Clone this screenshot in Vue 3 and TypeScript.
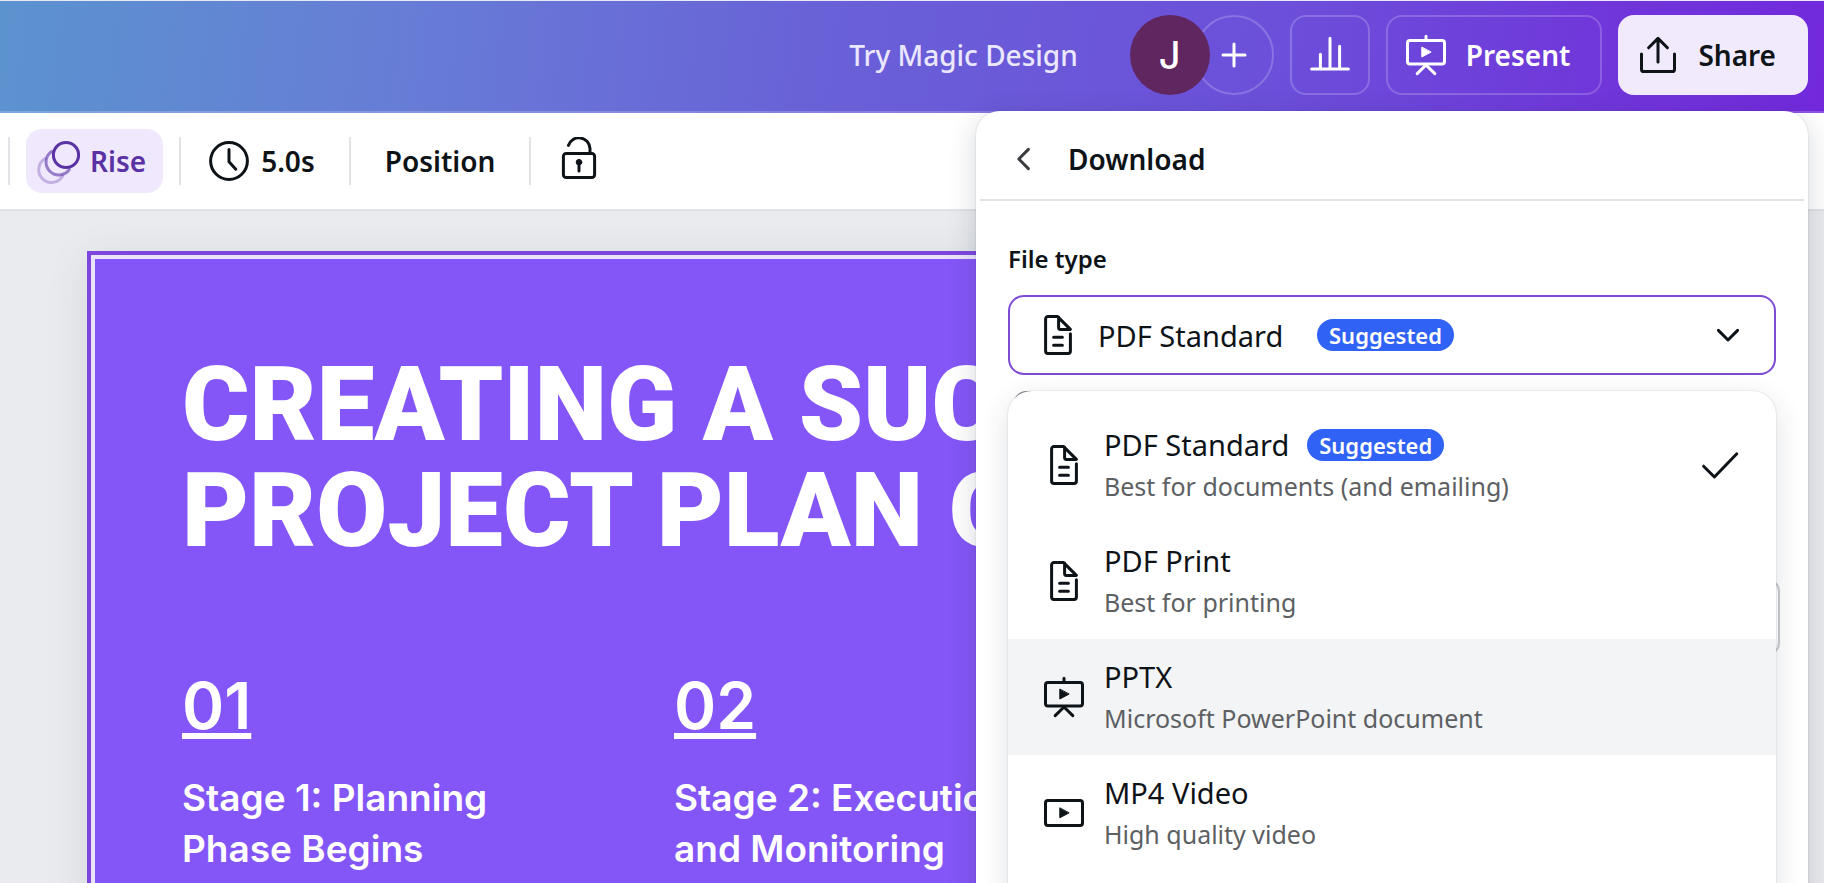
<script setup lang="ts">
import { ref } from 'vue'

type IconName = 'doc' | 'slides' | 'video'

interface FileType {
  id: string
  name: string
  hint: string
  icon: IconName
  suggested?: boolean
}

const fileTypes: FileType[] = [
  { id: 'pdf', name: 'PDF Standard', hint: 'Best for documents (and emailing)', icon: 'doc', suggested: true },
  { id: 'print', name: 'PDF Print', hint: 'Best for printing', icon: 'doc' },
  { id: 'pptx', name: 'PPTX', hint: 'Microsoft PowerPoint document', icon: 'slides' },
  { id: 'mp4', name: 'MP4 Video', hint: 'High quality video', icon: 'video' },
]

const stages = [
  { no: '01', lines: ['Stage 1: Planning', 'Phase Begins'] },
  { no: '02', lines: ['Stage 2: Execution', 'and Monitoring'] },
]

const selected = ref('pdf')
const active = ref('pptx')
</script>

<template>
  <div class="editor">
    <header class="topbar">
      <a class="magic" href="#">Try Magic Design</a>
      <div class="people">
        <button class="avatar" aria-label="Account">J</button>
        <button class="invite" aria-label="Add member">
          <svg class="icon" viewBox="0 0 24 24"><path d="M12 6.5v11M6.5 12h11" /></svg>
        </button>
      </div>
      <button class="ghost square" aria-label="Insights">
        <svg class="icon" viewBox="0 0 24 24"><path d="M2.8 19h18.4M7.2 18.5V11.6M12 18.5V3.6M16.8 18.5V7.6" /></svg>
      </button>
      <button class="ghost wide">
        <svg class="icon" viewBox="0 0 24 24">
          <rect x="2.75" y="4.75" width="18.5" height="11.7" rx="1.2" />
          <path d="M12 2.6v2M7.6 21.3l4.4-4.3 4.4 4.3" />
          <path class="solid" d="M9.9 8.2v4.8l4.5-2.4z" />
        </svg>
        <span>Present</span>
      </button>
      <button class="share">
        <svg class="icon" viewBox="0 0 24 24">
          <path d="M3.75 11.5v7.6c0 .7.5 1.2 1.2 1.2h14.1c.7 0 1.2-.5 1.2-1.2v-7.6M12 15.5V4M7.3 8.4 12 3.7l4.7 4.7" />
        </svg>
        <span>Share</span>
      </button>
    </header>

    <nav class="toolbar">
      <i class="sep"></i>
      <button class="tool rise">
        <svg class="icon" viewBox="0 0 24 24">
          <path opacity=".3" d="M4.6 10.8a6.4 6.4 0 1 0 8.8 8.6" />
          <path opacity=".6" d="M7.8 7.3a6.4 6.4 0 1 0 8.9 8.9" />
          <circle cx="15" cy="9" r="6.3" />
        </svg>
        <span>Rise</span>
      </button>
      <i class="sep"></i>
      <button class="tool timing">
        <svg class="icon" viewBox="0 0 24 24"><circle cx="12" cy="12" r="9.2" /><path d="M12 6.2v6.2l3.4 3.7" /></svg>
        <span>5.0s</span>
      </button>
      <i class="sep"></i>
      <button class="tool position">Position</button>
      <i class="sep"></i>
      <button class="tool lock" aria-label="Unlocked">
        <svg class="icon" viewBox="0 0 24 24">
          <rect x="4.2" y="8.2" width="15.6" height="12.1" rx="1.4" />
          <path d="M6.7 4.2a5.55 5.55 0 0 1 10.8 1.6v2.4M12 13v4" />
          <circle class="solid" cx="12" cy="12.6" r="1.4" />
        </svg>
      </button>
    </nav>

    <main class="workspace">
      <article class="slide">
        <h1>CREATING A SUC<br />PROJECT PLAN O</h1>
        <div class="stages">
          <section v-for="s in stages" :key="s.no">
            <p class="no">{{ s.no }}</p>
            <h2>{{ s.lines[0] }}<br />{{ s.lines[1] }}</h2>
          </section>
        </div>
      </article>
    </main>

    <aside class="panel">
      <div class="panel-head">
        <button class="back" aria-label="Back">
          <svg class="icon" viewBox="0 0 24 24"><path d="M14.2 7.2 9.4 12l4.8 4.8" /></svg>
        </button>
        <h3>Download</h3>
      </div>
      <div class="panel-body">
        <label for="file-type">File type</label>
        <div class="field">
          <select id="file-type" v-model="selected">
            <option v-for="f in fileTypes" :key="f.id" :value="f.id">{{ f.name }}</option>
          </select>
          <svg class="icon field-icon" viewBox="0 0 24 24">
            <path d="M18.2 11.4v8.6c0 .7-.5 1.2-1.2 1.2H7c-.7 0-1.2-.5-1.2-1.2V4c0-.7.5-1.2 1.2-1.2h4.8l6.4 6.4h-4.9c-.6 0-1-.4-1-1V3M9.8 13.1h4.4M9.8 17.1h4.4" />
          </svg>
          <span class="badge field-badge">Suggested</span>
          <svg class="icon field-arrow" viewBox="0 0 24 24"><path d="M7.2 9.7 12 14.5l4.8-4.8" /></svg>
        </div>
        <div class="settings">
          <input class="tick" type="checkbox" aria-label="Flatten PDF" />
          <input class="pages" type="text" aria-label="Pages" />
        </div>
        <ul class="menu" role="listbox" aria-label="File type">
          <li
            v-for="f in fileTypes"
            :key="f.id"
            role="option"
            :aria-selected="f.id === selected"
            :class="{ active: f.id === active }"
            @mouseenter="active = f.id"
            @click="selected = f.id"
          >
            <svg class="icon" viewBox="0 0 24 24">
              <path
                v-if="f.icon === 'doc'"
                d="M18.2 11.4v8.6c0 .7-.5 1.2-1.2 1.2H7c-.7 0-1.2-.5-1.2-1.2V4c0-.7.5-1.2 1.2-1.2h4.8l6.4 6.4h-4.9c-.6 0-1-.4-1-1V3M9.8 13.1h4.4M9.8 17.1h4.4"
              />
              <template v-else-if="f.icon === 'slides'">
                <rect x="2.75" y="4.75" width="18.5" height="11.7" rx="1.2" />
                <path d="M12 2.6v2M7.6 21.3l4.4-4.3 4.4 4.3" />
                <path class="solid" d="M9.9 8.2v4.8l4.5-2.4z" />
              </template>
              <template v-else>
                <rect x="2.75" y="5.75" width="18.5" height="12.5" rx="1.2" />
                <path class="solid" d="M9.9 9.6v4.8l4.5-2.4z" />
              </template>
            </svg>
            <div class="info">
              <p class="name">{{ f.name }}<span v-if="f.suggested" class="badge">Suggested</span></p>
              <p class="hint">{{ f.hint }}</p>
            </div>
            <svg v-if="f.id === selected" class="icon" viewBox="0 0 24 24"><path d="M3.8 12.6 9.2 18 20.4 6.4" /></svg>
          </li>
        </ul>
      </div>
    </aside>
  </div>
</template>

<style>
body {
  margin: 0;
}
</style>

<style scoped>
* {
  box-sizing: border-box;
}

.editor {
  position: relative;
  display: flex;
  flex-direction: column;
  height: 100vh;
  overflow: hidden;
  color: #0e1318;
  font-family: 'Noto Sans', sans-serif;
  font-size: 28px;
}

h1,
h2,
h3,
p,
ul {
  margin: 0;
  padding: 0;
}

button {
  display: flex;
  align-items: center;
  padding: 0;
  border: 0;
  background: none;
  color: inherit;
  font: inherit;
  font-weight: 600;
  cursor: pointer;
}

.icon {
  flex: none;
  width: 48px;
  height: 48px;
  fill: none;
  stroke: currentColor;
  stroke-width: 1.5;
  stroke-linecap: round;
  stroke-linejoin: round;
}

.icon .solid {
  fill: currentColor;
  stroke-width: 0.5;
}

.topbar {
  display: flex;
  flex: none;
  align-items: center;
  justify-content: flex-end;
  gap: 16px;
  height: 113px;
  padding: 0 16px 2px;
  border-top: 1px solid #e9e9f5;
  border-bottom: 2px solid rgba(255, 255, 255, 0.2);
  background: linear-gradient(97deg, #5b93cf 0%, #677cd6 23%, #6961d7 45%, #6c4fda 70%, #7036da 88%, #7229dc 100%) border-box;
  color: #fff;
}

.magic {
  margin-right: 36px;
  color: #ebe7ff;
  font-weight: 500;
  text-decoration: none;
}

.people {
  display: flex;
}

.avatar,
.invite {
  justify-content: center;
  width: 80px;
  height: 80px;
  border-radius: 50%;
}

.avatar {
  z-index: 1;
  background: #60265f;
  font-family: Inter, sans-serif;
  font-size: 38px;
  font-weight: 500;
}

.invite {
  margin-left: -16px;
  border: 2px solid rgba(255, 255, 255, 0.2);
}

.ghost {
  height: 80px;
  border: 2px solid rgba(255, 255, 255, 0.2);
  border-radius: 16px;
}

.square {
  justify-content: center;
  width: 80px;
}

.wide {
  gap: 16px;
  padding: 0 30px 0 14px;
}

.share {
  gap: 16px;
  height: 80px;
  padding: 0 32px 0 16px;
  border-radius: 16px;
  background: #f1eafd;
  color: #0e1318;
}

.toolbar {
  display: flex;
  flex: none;
  align-items: center;
  height: 98px;
  padding-left: 8px;
  border-bottom: 2px solid #e1e2e6;
  background: #fff;
}

.sep {
  width: 2px;
  height: 48px;
  background: #e1e3e6;
}

.tool {
  height: 64px;
}

.rise {
  gap: 6px;
  margin: 0 16px;
  padding: 0 17px 0 10px;
  border-radius: 16px;
  background: #f0e9fe;
  color: #5a32a3;
}

.timing {
  gap: 8px;
  padding: 0 34px 0 24px;
}

.position {
  padding: 0 34px;
}

.lock {
  padding: 0 24px;
}

.workspace {
  flex: 1;
  min-height: 0;
  padding: 40px 80px 0 87px;
  background: #e9ebee;
}

.slide {
  height: 900px;
  padding: 97px 0 0 87px;
  overflow: hidden;
  border: 4px solid #7d46dd;
  outline: 4px solid #ebe3fd;
  outline-offset: -8px;
  background: #8456f7;
  box-shadow: 0 8px 40px rgba(60, 70, 90, 0.1);
  color: #fff;
  font-family: Inter, sans-serif;
}

.slide h1 {
  margin-left: 4px;
  font-family: Roboto, sans-serif;
  font-size: 103px;
  font-weight: 900;
  line-height: 106px;
  white-space: nowrap;
}

.stages {
  display: grid;
  grid-template-columns: 492px 492px;
  margin: 102px 0 0 4px;
}

.no {
  font-size: 64px;
  font-weight: 600;
  line-height: 80px;
  text-decoration: underline;
  text-decoration-thickness: 6px;
  text-underline-offset: 4px;
  text-decoration-skip-ink: none;
}

.slide h2 {
  margin-top: 26px;
  font-size: 37px;
  font-weight: 600;
  line-height: 51px;
  white-space: nowrap;
}

.panel {
  position: absolute;
  top: 111px;
  right: 16px;
  bottom: -40px;
  width: 832px;
  border-radius: 24px;
  background: #fff;
  box-shadow: 0 0 2px rgba(40, 50, 70, 0.2), 0 8px 28px rgba(40, 50, 70, 0.2);
}

.panel-head {
  display: flex;
  align-items: center;
  gap: 20px;
  height: 90px;
  margin: 0 4px;
  padding: 8px 20px 0;
  border-bottom: 2px solid #e1e4e6;
}

.back {
  color: #3a3d40;
}

.panel-head h3 {
  font-size: 28px;
  font-weight: 600;
}

.panel-body {
  position: relative;
  padding: 40px 32px 0;
}

.panel-body label {
  display: block;
  height: 54px;
  font-size: 24px;
  font-weight: 600;
  line-height: 36px;
}

.field {
  position: relative;
}

.field select {
  display: block;
  width: 100%;
  height: 80px;
  padding: 0 88px;
  border: 2px solid #7d4ad4;
  border-radius: 16px;
  appearance: none;
  background: #fff;
  color: inherit;
  font: inherit;
  font-size: 29px;
}

.field-icon,
.field-arrow {
  position: absolute;
  top: 16px;
  left: 26px;
  pointer-events: none;
}

.field-arrow {
  right: 24px;
  left: auto;
}

.badge {
  display: inline-block;
  height: 32px;
  padding: 0 12px;
  border-radius: 16px;
  background: #3062f5;
  color: #fff;
  font-size: 22px;
  font-weight: 600;
  line-height: 32px;
}

.field-badge {
  position: absolute;
  top: 24px;
  left: 309px;
  pointer-events: none;
}

.settings {
  display: flex;
  flex-direction: column;
  gap: 140px;
  margin: 16px -4px 0 6px;
}

.tick {
  width: 48px;
  height: 48px;
  margin: 0;
  border: 2px solid #8b8e92;
  border-radius: 12px;
  appearance: none;
}

.pages {
  height: 76px;
  border: 2px solid #c9cbcf;
  border-radius: 12px;
  background: transparent;
  font: inherit;
}

.menu {
  position: absolute;
  top: 190px;
  right: 32px;
  left: 32px;
  height: 600px;
  padding-top: 16px;
  border-radius: 24px;
  background: #fff;
  box-shadow: 0 0 2px rgba(40, 50, 70, 0.2), 0 8px 28px rgba(40, 50, 70, 0.14);
  list-style: none;
}

.menu li {
  display: flex;
  align-items: center;
  gap: 16px;
  height: 116px;
  padding: 0 32px;
}

.menu .active {
  background: #f2f4f5;
}

.info {
  flex: 1;
  padding-bottom: 2px;
}

.name {
  display: flex;
  align-items: center;
  gap: 18px;
  font-size: 29px;
  line-height: 44px;
}

.hint {
  color: #5d6063;
  font-size: 25px;
  line-height: 38px;
}
</style>
